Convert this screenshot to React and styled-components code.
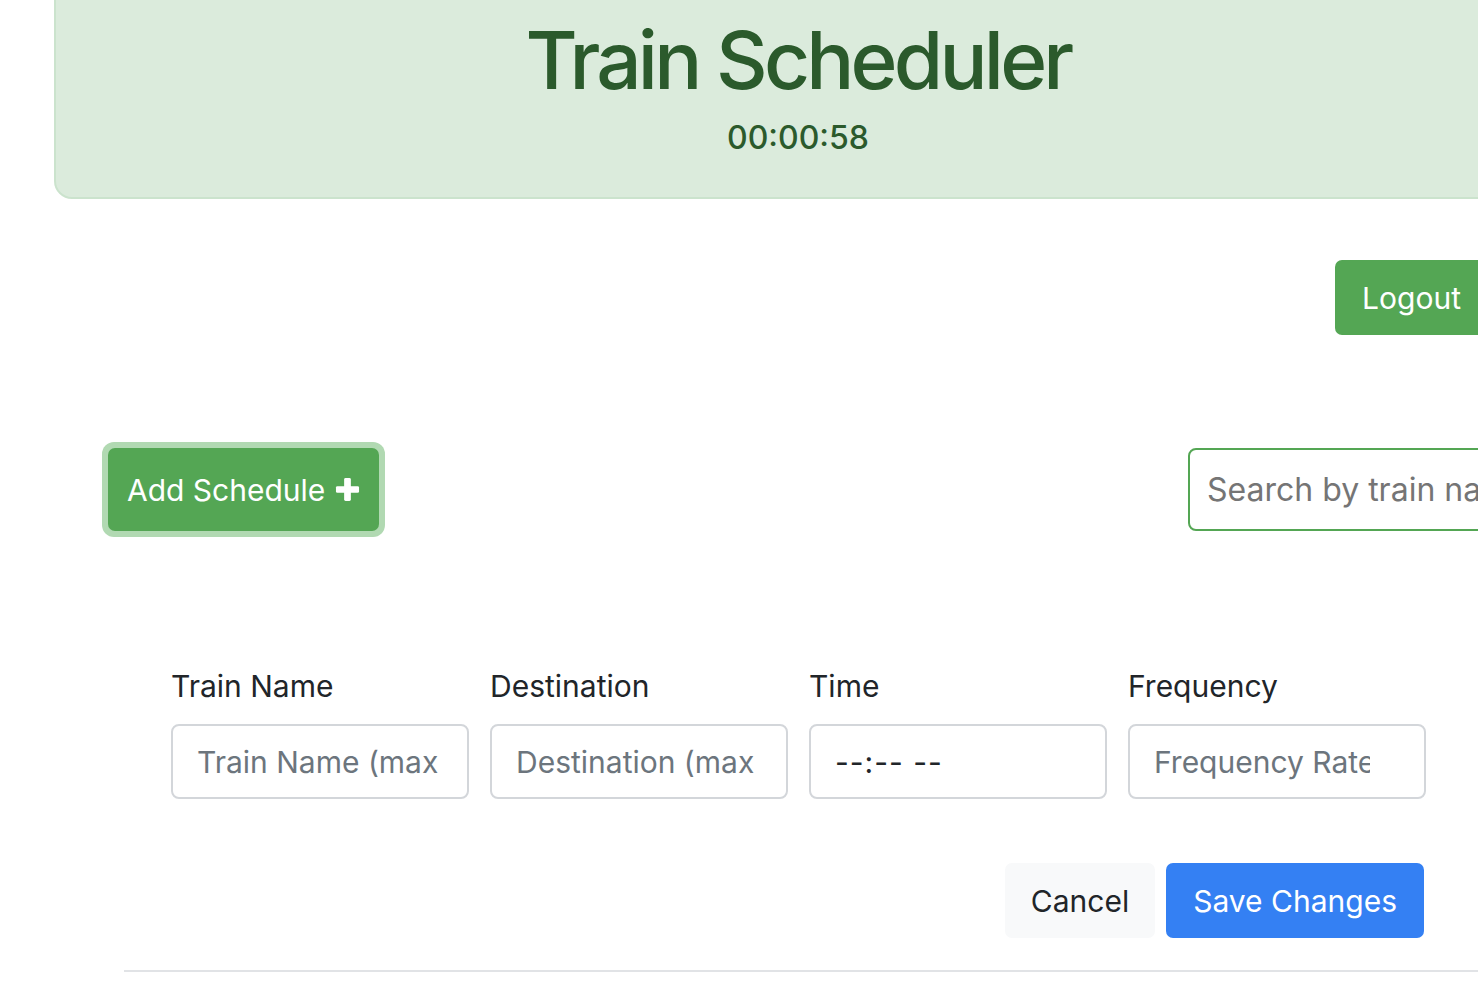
import React from "react";
import styled, { createGlobalStyle } from "styled-components";

const GlobalStyle = createGlobalStyle`
  html, body {
    margin: 0;
    padding: 0;
    background: #fff;
    overflow: hidden;
  }
  body {
    font-family: Inter, "Noto Sans", "Liberation Sans", sans-serif;
    color: #212529;
  }
  * { box-sizing: border-box; }
`;

const Page = styled.div`
  width: 1488px;
  margin-left: 54px;
  padding-bottom: 40px;
`;

const Header = styled.header`
  margin-top: -24px;
  height: 223px;
  background: #dbebdc;
  border: 2px solid #cbe3cd;
  border-radius: 18px;
  color: #2b5a2c;
  text-align: center;
  padding-top: 34px;

  h1 {
    margin: 0;
    font-size: 80px;
    font-weight: 500;
    line-height: 1.2;
    letter-spacing: -3.8px;
  }

  p {
    margin: 10px 0 0;
    font-size: 32px;
    font-weight: 500;
    letter-spacing: 0;
  }
`;

const TopBar = styled.div`
  display: flex;
  justify-content: flex-end;
  padding-right: 54px;
  margin-top: 61px;
`;

const Button = styled.button`
  font-family: inherit;
  font-size: 30px;
  line-height: 1.2;
  border: none;
  border-radius: 7px;
  cursor: pointer;
  height: ${(p) => p.$h || 75}px;
  padding: 0 ${(p) => p.$px || 26}px;
  background: ${(p) => p.$bg};
  color: ${(p) => p.$color || "#fff"};
  display: inline-flex;
  align-items: center;
  gap: 10px;
`;

const Toolbar = styled.div`
  display: flex;
  align-items: center;
  justify-content: space-between;
  margin-top: 107px;
  padding-left: 48px;
`;

const FocusRing = styled.div`
  padding: 6px;
  background: #b1d9b2;
  border-radius: 12px;
  display: inline-flex;
`;

const Search = styled.input`
  width: 414px;
  height: 83px;
  margin-right: -60px;
  border: 2px solid #54a654;
  border-radius: 8px;
  padding: 0 17px;
  font-family: inherit;
  font-size: 32px;
  color: #212529;
  outline: none;

  &::placeholder {
    color: #757575;
  }
`;

const Section = styled.section`
  margin-top: 131px;
  margin-left: 70px;
  margin-right: -100px;
  border-bottom: 2px solid #e1e3e6;
  padding: 0 0 32px 47px;
`;

const FieldRow = styled.div`
  display: grid;
  grid-template-columns: repeat(4, 298px);
  column-gap: 21px;
`;

const Field = styled.label`
  display: flex;
  flex-direction: column;
  gap: 20px;
  font-size: 30px;
  color: #212529;
`;

const Input = styled.input`
  width: 100%;
  height: 75px;
  border: 2px solid #d3d6da;
  border-radius: 8px;
  padding: 0 ${(p) => p.$pr || 24}px 0 24px;
  font-family: inherit;
  font-size: 30px;
  color: #212529;
  background: #fff;
  outline: none;

  &::placeholder {
    color: #6c757d;
  }
`;

const Actions = styled.div`
  display: flex;
  justify-content: flex-end;
  gap: 11px;
  width: 1253px;
  margin-top: 64px;
`;

const PlusIcon = () => (
  <svg width="25" height="25" viewBox="0 0 26 26" aria-hidden="true">
    <rect x="9.5" y="1" width="7" height="24" rx="1.5" fill="#fff" />
    <rect x="1" y="9.5" width="24" height="7" rx="1.5" fill="#fff" />
  </svg>
);

export default function App() {
  return (
    <>
      <GlobalStyle />
      <Page>
        <Header>
          <h1>Train Scheduler</h1>
          <p>00:00:58</p>
        </Header>

        <TopBar>
          <Button $bg="#54a654" $px={27}>Logout</Button>
        </TopBar>

        <Toolbar>
          <FocusRing>
            <Button $bg="#54a654" $h={83} $px={19}>
              Add Schedule <PlusIcon />
            </Button>
          </FocusRing>
          <Search placeholder="Search by train name" />
        </Toolbar>

        <Section>
          <FieldRow>
            <Field>
              Train Name
              <Input placeholder="Train Name (max 20 characters)" />
            </Field>
            <Field>
              Destination
              <Input placeholder="Destination (max 20 characters)" />
            </Field>
            <Field>
              Time
              <Input readOnly value="--:-- --" style={{ letterSpacing: "1px" }} />
            </Field>
            <Field>
              Frequency
              <Input $pr={54} placeholder="Frequency Rate (minutes)" />
            </Field>
          </FieldRow>
          <Actions>
            <Button $bg="#f8f9fa" $color="#212529" $px={26}>Cancel</Button>
            <Button $bg="#3480f3" $px={27}>Save Changes</Button>
          </Actions>
        </Section>
      </Page>
    </>
  );
}
